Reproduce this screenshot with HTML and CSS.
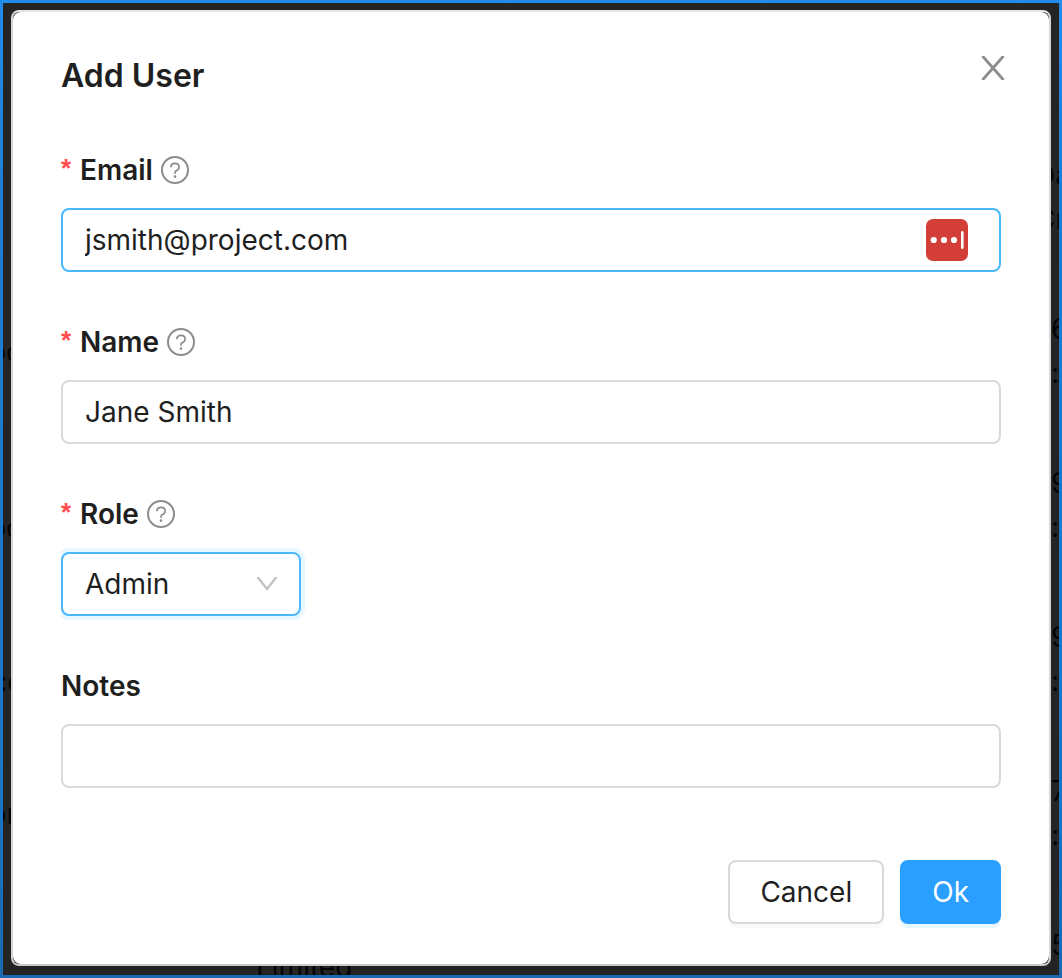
FILE: index.html
```html
<!DOCTYPE html>
<html lang="en">
<head>
<meta charset="utf-8">
<meta name="viewport" content="width=device-width, initial-scale=1">
<title>Add User</title>
<link rel="stylesheet" href="styles.css">
</head>
<body>
<svg class="sprite" aria-hidden="true">
  <symbol id="help" viewBox="0 0 28 28">
    <circle cx="14" cy="14" r="13" fill="none" stroke="currentColor" stroke-width="2"/>
    <path d="M9.900 11.200C9.900 8.900 11.500 7.400 14 7.400s4.100 1.600 4.100 3.700c0 1.800-1 2.900-2.500 3.500-1.100.4-1.600 1.100-1.600 2.100v1" fill="none" stroke="currentColor" stroke-width="1.700"/>
    <circle cx="14" cy="20.600" r="1.300" fill="currentColor"/>
  </symbol>
</svg>
<div class="page">
  <div class="behind" aria-hidden="true">
    <span class="cell cell-left row-2">oc</span>
    <span class="cell cell-left row-3">oc</span>
    <span class="cell cell-left row-4">co</span>
    <span class="cell cell-left row-5">or</span>
    <span class="cell cell-right row-1">Da<br>Cr</span>
    <span class="cell cell-right row-2">6<br>:</span>
    <span class="cell cell-right row-3">9<br>:</span>
    <span class="cell cell-right row-4">9<br>:</span>
    <span class="cell cell-right row-5">7<br>:</span>
    <span class="cell cell-right row-6">5</span>
    <span class="cell cell-bottom">Limited</span>
  </div>
  <div class="modal" role="dialog" aria-labelledby="title">
    <form class="panel">
      <h1 class="title" id="title">Add User</h1>
      <button class="close" type="button" aria-label="Close">
        <svg class="close-icon" viewBox="0 0 24 24"><path d="M1.500 0 22.500 24M22.500 0 1.500 24" fill="none" stroke="currentColor" stroke-width="2.800"/></svg>
      </button>

      <div class="field">
        <div class="label-row">
          <span class="required">*</span>
          <label class="label" for="email">Email</label>
          <svg class="help"><use href="#help"/></svg>
        </div>
        <div class="control">
          <input class="input focused" id="email" type="text" value="jsmith@project.com">
          <svg class="vault" viewBox="0 0 42 42">
            <rect width="42" height="42" rx="7" fill="#d33f38"/>
            <g fill="#fff"><circle cx="7.700" cy="21" r="3.100"/><circle cx="18" cy="21" r="3.100"/><circle cx="28" cy="21" r="3.100"/><rect x="35" y="12" width="2.600" height="18" rx="1.300"/></g>
          </svg>
        </div>
      </div>

      <div class="field">
        <div class="label-row">
          <span class="required">*</span>
          <label class="label" for="name">Name</label>
          <svg class="help"><use href="#help"/></svg>
        </div>
        <input class="input" id="name" type="text" value="Jane Smith">
      </div>

      <div class="field">
        <div class="label-row">
          <span class="required">*</span>
          <label class="label" for="role">Role</label>
          <svg class="help"><use href="#help"/></svg>
        </div>
        <div class="control select-wrap">
          <select class="input focused select" id="role"><option>Admin</option></select>
          <svg class="chevron" viewBox="0 0 22 14"><path d="M1.500 0 11 12 20.500 0" fill="none" stroke="currentColor" stroke-width="2.200"/></svg>
        </div>
      </div>

      <div class="field">
        <div class="label-row"><label class="label" for="notes">Notes</label></div>
        <input class="input" id="notes" type="text">
      </div>

      <div class="actions">
        <button class="button" type="button">Cancel</button>
        <button class="button primary" type="button">Ok</button>
      </div>
    </form>
  </div>
</div>
</body>
</html>
```
FILE: styles.css
```css
* {
  box-sizing: border-box;
}

body {
  margin: 0;
  min-height: 100vh;
  display: flex;
  padding: 3px;
  background: linear-gradient(#228ceb, #1e7ed4 20%, #1b76c6 80%, #1a69b0);
  color: #1f1f1f;
  font-family: Inter, "Liberation Sans", sans-serif;
  font-size: 28px;
}

.sprite {
  position: absolute;
  width: 0;
  height: 0;
}

.page {
  position: relative;
  flex: 1;
  padding: 7px 8px 9px;
  background: #242424;
  overflow: hidden;
}

.behind {
  position: absolute;
  inset: 0;
  color: #040404;
  line-height: 44px;
}

.cell {
  position: absolute;
  white-space: nowrap;
}

.cell-left {
  right: calc(100% - 19px);
}

.cell-right {
  left: calc(100% - 8px);
}

.cell-bottom {
  left: 253px;
  top: 942px;
}

.row-1 { top: 150px; }
.row-2 { top: 304px; }
.row-3 { top: 458px; }
.row-4 { top: 612px; }
.row-5 { top: 766px; }
.row-6 { top: 920px; }

.cell-right.row-1 { left: calc(100% - 24px); }
.cell-left.row-2 { top: 327px; }
.cell-left.row-3 { top: 503px; }
.cell-left.row-4 { top: 657px; right: calc(100% - 21px); }
.cell-left.row-5 { top: 789px; right: calc(100% - 14px); }

.modal {
  position: relative;
  border: 2px solid #d6d6d6;
  border-top-color: #e6e6e6;
  border-bottom-color: #cacaca;
  border-radius: 8px;
  background: #242424;
}

.panel {
  padding: 42px 48px 40px;
  border-radius: 8px;
  background: #fff;
}

.title {
  margin: 0 0 50px;
  font-size: 32px;
  font-weight: 600;
  line-height: 44px;
}

.close {
  position: absolute;
  top: 36px;
  right: 36px;
  display: flex;
  padding: 8px;
  border: 0;
  background: none;
  color: #8c8c8c;
}

.close-icon {
  width: 24px;
  height: 24px;
}

.field {
  display: flex;
  flex-direction: column;
  gap: 16px;
  margin-bottom: 48px;
}

.label-row {
  display: flex;
  align-items: center;
  height: 44px;
}

.label {
  font-weight: 600;
}

.required {
  width: 19px;
  color: #ff4d4f;
  font-family: "Liberation Sans", sans-serif;
  font-size: 26px;
  font-weight: 700;
  line-height: 40px;
  align-self: flex-start;
}

.help {
  width: 28px;
  height: 28px;
  margin-left: 8px;
  color: #8c8c8c;
}

.control {
  position: relative;
  display: flex;
}

.input {
  width: 100%;
  height: 64px;
  padding: 0 22px;
  border: 2px solid #d9d9d9;
  border-radius: 8px;
  outline: 0;
  background: #fff;
  color: inherit;
  font: inherit;
}

.focused {
  border-color: #4ab8ff;
}

.vault {
  position: absolute;
  top: 11px;
  right: 33px;
  width: 42px;
  height: 42px;
}

.select-wrap {
  width: 240px;
  clip-path: inset(-4px -4px -4px 0);
}

.select {
  appearance: none;
  box-shadow: 0 0 0 4px #e8f7ff;
}

.chevron {
  position: absolute;
  top: 25px;
  right: 23px;
  width: 22px;
  height: 14px;
  color: #bfbfbf;
  pointer-events: none;
}

.actions {
  display: flex;
  justify-content: flex-end;
  gap: 16px;
  margin-top: 72px;
}

.button {
  height: 64px;
  padding: 0 30px;
  border: 2px solid #d9d9d9;
  border-radius: 8px;
  background: #fff;
  box-shadow: 0 4px 0 #fafafa;
  color: inherit;
  font: inherit;
}

.primary {
  border-color: #2a9fff;
  background: #2a9fff;
  box-shadow: 0 4px 0 #e8f7ff;
  color: #fff;
}

.field:nth-last-child(2) {
  margin-bottom: 0;
}
```
